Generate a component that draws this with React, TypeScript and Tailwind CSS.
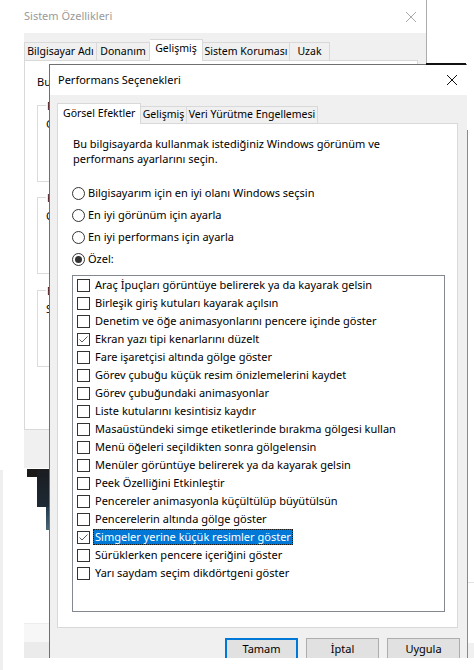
import React from 'react';

type Effect = { label: string; checked?: boolean; selected?: boolean };

const effects: Effect[] = [
  { label: 'Araç İpuçları görüntüye belirerek ya da kayarak gelsin' },
  { label: 'Birleşik giriş kutuları kayarak açılsın' },
  { label: 'Denetim ve öğe animasyonlarını pencere içinde göster' },
  { label: 'Ekran yazı tipi kenarlarını düzelt', checked: true },
  { label: 'Fare işaretçisi altında gölge göster' },
  { label: 'Görev çubuğu küçük resim önizlemelerini kaydet' },
  { label: 'Görev çubuğundaki animasyonlar' },
  { label: 'Liste kutularını kesintisiz kaydır' },
  { label: 'Masaüstündeki simge etiketlerinde bırakma gölgesi kullan' },
  { label: 'Menü öğeleri seçildikten sonra gölgelensin' },
  { label: 'Menüler görüntüye belirerek ya da kayarak gelsin' },
  { label: 'Peek Özelliğini Etkinleştir' },
  { label: 'Pencereler animasyonla küçültülüp büyütülsün' },
  { label: 'Pencerelerin altında gölge göster' },
  { label: 'Simgeler yerine küçük resimler göster', checked: true, selected: true },
  { label: 'Sürüklerken pencere içeriğini göster' },
  { label: 'Yarı saydam seçim dikdörtgeni göster' },
];

const radios = [
  { label: 'Bilgisayarım için en iyi olanı Windows seçsin' },
  { label: 'En iyi görünüm için ayarla' },
  { label: 'En iyi performans için ayarla' },
  { label: 'Özel:', checked: true },
];

const CloseIcon = ({ color }: { color: string }) => (
  <svg width="10" height="10" viewBox="0 0 10 10" className="shrink-0">
    <path d="M0 0L10 10M10 0L0 10" stroke={color} strokeWidth="1" />
  </svg>
);

const CheckBox = ({ checked }: { checked?: boolean }) => (
  <span className="w-[13px] h-[13px] shrink-0 border border-[#333333] bg-white flex items-center justify-center">
    {checked && (
      <svg width="11" height="11" viewBox="0 0 11 11">
        <path d="M1.5 5.5L4 8L9.5 2.5" fill="none" stroke="#5a5a5a" strokeWidth="1" />
      </svg>
    )}
  </span>
);

const Radio = ({ checked }: { checked?: boolean }) => (
  <span className="w-[13px] h-[13px] shrink-0 rounded-full border border-[#333333] bg-white flex items-center justify-center">
    {checked && <span className="w-[7px] h-[7px] rounded-full bg-[#333333]" />}
  </span>
);

// only the left sliver of each group box shows from under the front dialog
const GroupBox = ({ title, text, className }: { title: string; text: string; className: string }) => (
  <div className={`relative w-[368px] border border-[#dcdcdc] pl-[8px] pt-[10px] ${className}`}>
    <span className="absolute left-[8px] top-[-8px] bg-white px-px leading-[15px] whitespace-nowrap">{title}</span>
    <div className="leading-[15px] whitespace-nowrap">{text}</div>
  </div>
);

function BackWindow() {
  const tabs = [
    { label: 'Bilgisayar Adı', w: 'w-[73px] border-l' },
    { label: 'Donanım', w: 'w-[53px]' },
    { label: 'Gelişmiş', w: 'w-[53px]', active: true },
    { label: 'Sistem Koruması', w: 'w-[87px]' },
    { label: 'Uzak', w: 'w-[40px]' },
  ];
  return (
    <div className="absolute left-0 top-0 w-[427px] h-[468px] flex flex-col border-r border-[#adadad]">
      <div className="h-[33px] shrink-0 bg-white flex items-center justify-between pl-[24px] pr-[10px] text-[#9a9a9a]">
        <span>Sistem Özellikleri</span>
        <CloseIcon color="#a8a8a8" />
      </div>
      <div className="flex-1 ml-[24px] bg-[#f0f0f0] pt-[6px] flex flex-col">
        <div className="flex items-end h-[22px] text-[10.5px]">
          {tabs.map((t) =>
            t.active ? (
              <div
                key={t.label}
                className={`${t.w} h-[22px] relative z-10 bg-white border-t border-r border-[#d9d9d9] flex items-center justify-center pb-[3px] whitespace-nowrap`}
              >
                {t.label}
              </div>
            ) : (
              <div
                key={t.label}
                className={`${t.w} h-[18px] mb-px border-t border-r border-[#d9d9d9] flex items-center justify-center whitespace-nowrap`}
              >
                {t.label}
              </div>
            )
          )}
        </div>
        <div className="-mt-px w-[394px] h-[370px] bg-white border border-[#d9d9d9]">
          <div className="w-[24px] h-full overflow-hidden pl-[12px] pt-[13px]">
            <div className="leading-[15px] whitespace-nowrap">
              Bu değişikliklerin çoğunu yapmak için Yönetici olarak oturum açmanız gerekir.
            </div>
            <GroupBox
              className="mt-[16px] h-[77px]"
              title="Performans"
              text="Görsel efektler, işlemci zamanlaması, bellek kullanımı ve sanal bellek"
            />
            <GroupBox
              className="mt-[15px] h-[77px]"
              title="Kullanıcı Profilleri"
              text="Oturum açma ile ilgili masaüstü ayarları"
            />
            <GroupBox
              className="mt-[16px] h-[77px]"
              title="Başlangıç ve Kurtarma"
              text="Sistem başlangıcı, sistem hatası ve hata ayıklama bilgileri"
            />
          </div>
        </div>
      </div>
    </div>
  );
}

function PerformanceWindow() {
  return (
    <div className="absolute left-[49px] top-[64px] w-[418px] h-[594px] overflow-hidden border-l border-t border-[#707070] bg-[#f0f0f0] flex flex-col">
      <div className="h-[30px] shrink-0 bg-white flex items-center justify-between pl-[8px] pr-[10px]">
        <span>Performans Seçenekleri</span>
        <CloseIcon color="#111111" />
      </div>
      <div className="px-[7px] pt-[8px] flex flex-col">
        <div className="flex items-end h-[21px] text-[10.5px]">
          <div className="w-[84px] h-[21px] relative z-10 bg-white border-l border-t border-r border-[#d9d9d9] flex items-center pl-[5px] pb-px whitespace-nowrap">
            Görsel Efektler
          </div>
          <div className="w-[46px] h-[17px] mb-px border-t border-r border-[#d9d9d9] flex items-center justify-center whitespace-nowrap">
            Gelişmiş
          </div>
          <div className="w-[131px] h-[17px] mb-px border-t border-r border-[#d9d9d9] flex items-center justify-center whitespace-nowrap">
            Veri Yürütme Engellemesi
          </div>
        </div>

        <div className="-mt-px w-[401px] h-[505px] bg-white border border-[#d9d9d9] pl-[14px] pt-[12px]">
          <p className="ml-px leading-[15px] whitespace-nowrap">
            Bu bilgisayarda kullanmak istediğiniz Windows görünüm ve
            <br />
            performans ayarlarını seçin.
          </p>

          <div className="mt-[16px] flex flex-col">
            {radios.map((r) => (
              <label key={r.label} className="h-[22px] flex items-center gap-[3px]">
                <Radio checked={r.checked} />
                <span className="whitespace-nowrap">{r.label}</span>
              </label>
            ))}
          </div>

          <div className="mt-[5px] w-[373px] h-[337px] border border-[#828790] bg-white">
            {effects.map((e) => (
              <div key={e.label} className="h-[18px] flex items-center pl-[4px]">
                <CheckBox checked={e.checked} />
                <span
                  className={
                    e.selected
                      ? 'ml-[3px] px-[2px] h-[16px] leading-[15px] bg-[#0078d7] text-white whitespace-nowrap [outline:1px_dotted_#1a1a1a] [outline-offset:-1px]'
                      : 'ml-[3px] px-[2px] h-[16px] leading-[15px] whitespace-nowrap'
                  }
                >
                  {e.label}
                </span>
              </div>
            ))}
          </div>
        </div>

        <div className="mt-[10px] flex justify-end gap-[8px]">
          <button className="w-[73px] h-[23px] bg-[#e1e1e1] border-2 border-[#0078d7] flex items-center justify-center">
            Tamam
          </button>
          <button className="w-[73px] h-[23px] bg-[#e1e1e1] border border-[#adadad] flex items-center justify-center">
            İptal
          </button>
          <button className="w-[73px] h-[23px] bg-[#e1e1e1] border border-[#adadad] flex items-center justify-center">
            Uygula
          </button>
        </div>
      </div>
    </div>
  );
}

export default function App() {
  return (
    <div className="relative w-[474px] h-[670px] overflow-hidden bg-white text-[11px] text-black [font-family:'Noto_Sans',sans-serif]">
      {/* desktop fragments behind the dialogs */}
      <div className="absolute left-0 top-0 w-[3px] h-[33px] bg-[#ececec]" />
      <div className="absolute left-0 top-[470px] w-[3px] h-[200px] bg-[#efefef]" />
      <div className="absolute left-[27px] top-[469px] w-[22px] h-[8px] bg-[#1c1a18]" />
      <div className="absolute left-[37px] top-[469px] w-[12px] h-[38px] bg-gradient-to-b from-[#1a1c20] to-[#1d2a36]" />
      <div className="absolute left-[46px] top-[507px] w-[3px] h-[23px] bg-gradient-to-b from-[#22384a] to-[#4a6878]" />
      <div className="absolute left-[24px] top-[623px] w-[25px] h-[19px] bg-[#f7f7f7] border-t border-[#ececec]" />
      <div className="absolute left-[24px] top-[642px] w-[25px] h-[16px] bg-[#ebebeb]" />
      <div className="absolute left-[467px] top-[130px] w-px h-[528px] bg-[#8a8a8a]" />
      <div className="absolute left-[468px] top-[582px] w-[6px] h-px bg-[#e2e2e2]" />
      <div className="absolute left-[468px] top-[643px] w-[6px] h-[15px] bg-[#f0f0f0]" />

      <BackWindow />
      <PerformanceWindow />

      <div className="absolute left-[426px] top-[63px] w-[40px] h-[2px] bg-[#111111]" />
    </div>
  );
}
